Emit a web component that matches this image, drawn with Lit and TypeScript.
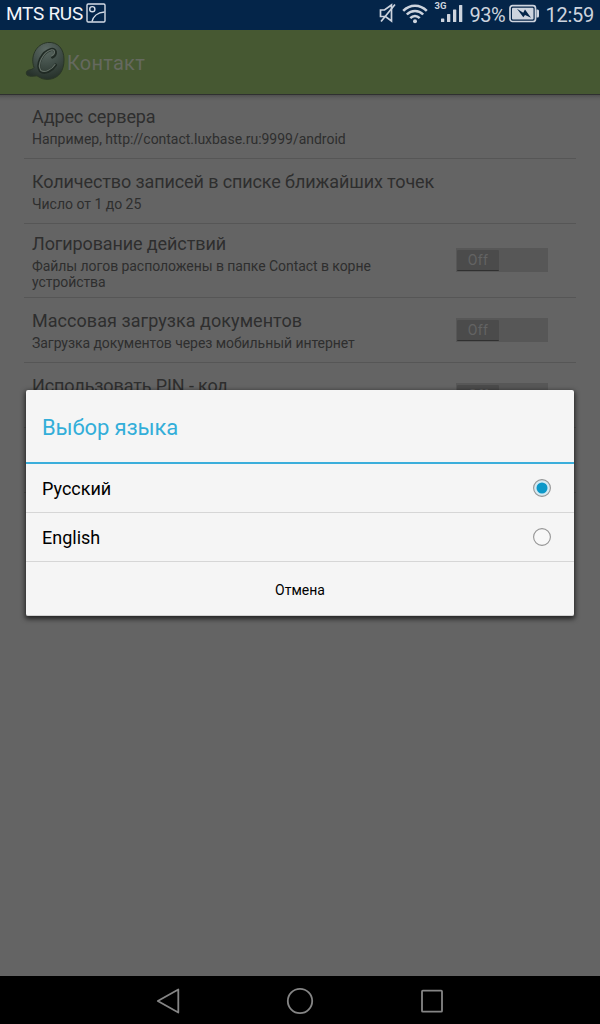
import { LitElement, html, css, svg } from "lit";
import { customElement, property, state } from "lit/decorators.js";
import { classMap } from "lit/directives/class-map.js";

interface Setting {
  title: string;
  summary?: string;
  toggle?: boolean;
  loose?: boolean;
}

const SETTINGS: Setting[] = [
  { title: "Адрес сервера", summary: "Например, http://contact.luxbase.ru:9999/android" },
  { title: "Количество записей в списке ближайших точек", summary: "Число от 1 до 25" },
  { title: "Логирование действий", summary: "Файлы логов расположены в папке Contact в корне устройства", toggle: true },
  { title: "Массовая загрузка документов", summary: "Загрузка документов через мобильный интернет", toggle: true, loose: true },
  { title: "Использовать PIN - код", summary: "", toggle: true },
  { title: "" },
];

@customElement("status-bar")
class StatusBar extends LitElement {
  static styles = css`
    :host { display: flex; height: 30px; background: #042549; color: #f2f5fa; align-items: center; justify-content: space-between; padding: 0 6px 0 6px; box-sizing: border-box; }
    .side { display: flex; align-items: center; height: 30px; }
    .carrier { font-size: 19px; line-height: 28px; letter-spacing: -0.27px; height: 30px; }
    .right { color: #cdd4de; }
    .value { font-size: 20px; line-height: 31px; height: 30px; }
    .percent { letter-spacing: -0.5px; width: 37px; margin-left: 4px; }
    .clock { letter-spacing: -0.25px; margin-left: 5px; }
    .net { display: grid; width: 31px; height: 30px; margin-left: 6px; }
    .net > * { grid-area: 1 / 1; }
    .tech { font-size: 9.500px; font-weight: 700; line-height: 12px; letter-spacing: 0.2px; }
    svg { display: block; }
    .pic { margin: -4px 0 0 3px; }
    .wifi { margin-left: 6px; }
    .battery { margin-left: 3px; }
  `;
  render() {
    return html`
      <div class="side">
        <span class="carrier">MTS RUS</span>
        <svg class="pic" width="20" height="20" viewBox="0 0 20 20" fill="none" stroke="#d5dce6" stroke-width="1.4">
          <rect x="1" y="1" width="18" height="18" rx="1.2" />
          <circle cx="6.3" cy="6.2" r="2.6" />
          <path d="M6 18.500C7 14 11 9.500 18.500 9" />
        </svg>
      </div>
      <div class="side right">
        <svg width="18" height="30" viewBox="0 0 18 30" fill="none" stroke="#cdd4de" stroke-width="1.7">
          <path d="M2.500 10H6.500L13.500 5V21L7.500 16.500H2.500Z" />
          <path d="M17 4.500L3 21.500" />
        </svg>
        <svg class="wifi" width="26" height="30" viewBox="0 0 26 30" fill="none" stroke="#cdd4de" stroke-width="2.500">
          <path d="M1.200 10.800C8 3.900 18 3.900 24.800 10.800" />
          <path d="M4.800 14.500C9.500 9.700 16.500 9.700 21.200 14.500" />
          <path d="M8.300 18.200C11 15.300 15 15.300 17.700 18.200" />
          <circle cx="13" cy="21.300" r="2" fill="#cdd4de" stroke="none" />
        </svg>
        <div class="net">
          <svg width="31" height="30" viewBox="0 0 31 30" fill="#cdd4de">
            <rect x="7" y="18.500" width="3.300" height="3.500" rx=".6" />
            <rect x="13" y="14" width="3.300" height="8" rx=".6" />
            <rect x="19" y="9.500" width="3.300" height="12.500" rx=".6" />
            <rect x="25" y="5" width="3.300" height="17" rx=".6" />
          </svg>
          <span class="tech">3G</span>
        </div>
        <span class="value percent">93%</span>
        <svg class="battery" width="31" height="30" viewBox="0 0 31 30">
          <rect x="1" y="5.700" width="25.500" height="15.800" rx="2.500" fill="none" stroke="#cdd4de" stroke-width="1.700" />
          <rect x="3" y="7.700" width="21.500" height="11.800" rx="1" fill="#cdd4de" />
          <path d="M27.500 9.500h1.200q1.300 0 1.300 1.500v5q0 1.500-1.300 1.500h-1.200z" fill="#cdd4de" />
          <path d="M8 8.800L14.200 12.800L16 9.600L22 17.800L16 15L14.300 17.300Z" fill="#042549" />
        </svg>
        <span class="value clock">12:59</span>
      </div>
    `;
  }
}

@customElement("action-bar")
class ActionBar extends LitElement {
  static styles = css`
    :host { display: flex; height: 64px; box-sizing: border-box; align-items: center; padding-left: 24px; background: #465832; color: #65695f; }
    .title { font-size: 20px; letter-spacing: 0.25px; line-height: 24px; margin: 2px 0 0 0; }
    svg { display: block; width: 43px; height: 44px; }
  `;
  render() {
    return html`
      <svg viewBox="0 0 43 44">
        <defs>
          <radialGradient id="ball" cx="52%" cy="20%" r="78%">
            <stop offset="0" stop-color="#5c6963" />
            <stop offset=".5" stop-color="#414e48" />
            <stop offset="1" stop-color="#27322b" />
          </radialGradient>
        </defs>
        <path d="M23.500 2.500C34 1.500 40 9 40 19.500C40 31 35 38 25.500 39.300C20 39.800 17 38.500 13 35.800C8 36.500 2 37 2.300 32.800C3 28.500 8 31 10 27.500C6 16.500 12 4 23.500 2.500Z" fill="url(#ball)" stroke="#2a3626" stroke-width="1" />
        <path d="M28.500 17C33 14 32 8.500 27 9.500C18 12 12 24.500 16.500 31C21 34.500 28 30.500 31.500 25" fill="none" stroke="#202a24" stroke-width="3.200" stroke-linecap="round" />
        <path d="M27.500 16C32 13.500 31 9 27 10C19 12.500 12.500 24.500 17 30.500C20.500 33 27.500 30 31 24.500" fill="none" stroke="#626e66" stroke-width="1.300" stroke-linecap="round" />
      </svg>
      <span class="title">Контакт</span>
    `;
  }
}

@customElement("setting-row")
class SettingRow extends LitElement {
  @property({ attribute: false }) item!: Setting;
  static styles = css`
    :host { display: flex; align-items: center; box-sizing: border-box; min-height: 65px; margin: 0 24px; padding: 0 28px 0 8px; border-bottom: 1px solid #565656; color: #2e2e2e; }
    .texts { flex: 1; padding: 8.500px 0 7.500px; }
    .title { font-size: 18px; line-height: 21px; letter-spacing: -0.11px; min-height: 21px; }
    .title.loose { letter-spacing: 0.05px; }
    .summary { font-size: 14px; line-height: 16px; margin-top: 4px; min-height: 16px; letter-spacing: -0.02px; }
    .narrow { max-width: 350px; letter-spacing: -0.06px; }
    .track { width: 92px; height: 24px; background: #575757; box-sizing: border-box; padding: 2px 1px 1px; margin-bottom: 1px; }
    .thumb { width: 42px; height: 21px; box-sizing: border-box; background: #4b4b4b; border-bottom: 1px solid #303030; border-radius: 1px; color: #636363; font-size: 14px; line-height: 21px; text-align: center; letter-spacing: 0.3px; }
  `;
  render() {
    const { title, summary, toggle, loose } = this.item;
    return html`
      <div class="texts">
        <div class=${classMap({ title: true, loose: !!loose })}>${title}</div>
        <div class=${classMap({ summary: true, narrow: !!toggle })}>${summary}</div>
      </div>
      ${toggle ? html`<div class="track"><div class="thumb">Off</div></div>` : null}
    `;
  }
}

@customElement("language-dialog")
class LanguageDialog extends LitElement {
  @state() private selected = "Русский";
  static styles = css`
    :host { display: block; background: #f5f5f5; border-radius: 2px; color: #000; box-shadow: 0 2px 5px 1px rgba(0, 0, 0, 0.65); border-bottom: 1px solid #d2d2d2; box-sizing: border-box; height: 226px; }
    .heading { height: 72px; box-sizing: border-box; padding: 0 16px; font-size: 22px; line-height: 76px; letter-spacing: -0.12px; color: #33aed9; }
    .rule { height: 2px; background: #3baedb; }
    .option { display: flex; align-items: center; justify-content: space-between; height: 49px; box-sizing: border-box; padding: 0 22px 0 16px; border-bottom: 1px solid #d6d6d6; font-size: 18px; cursor: pointer; }
    .name { line-height: 48px; padding-top: 2px; }
    svg { display: block; }
    .cancel { text-align: center; font-size: 14px; line-height: 56px; height: 53px; }
  `;
  render() {
    return html`
      <div class="heading">Выбор языка</div>
      <div class="rule"></div>
      ${["Русский", "English"].map(
        (name) => html`
          <div class="option" @click=${() => (this.selected = name)}>
            <span class="name">${name}</span>
            <svg width="20" height="20" viewBox="0 0 20 20">
              <circle cx="10" cy="10" r="8.400" fill=${name === this.selected ? "#d5eaf2" : "#f8f8f8"} stroke="#959595" stroke-width="1.100" />
              ${name === this.selected ? svg`<circle cx="10" cy="10" r="5.500" fill="#0c98c8" />` : null}
            </svg>
          </div>
        `,
      )}
      <div class="cancel">Отмена</div>
    `;
  }
}

@customElement("nav-bar")
class NavBar extends LitElement {
  static styles = css`
    :host { display: flex; justify-content: center; align-items: center; gap: 104px; height: 48px; background: #000; padding-top: 2px; box-sizing: border-box; }
    svg { display: block; fill: none; stroke: #858585; stroke-width: 1.800; stroke-linejoin: round; }
  `;
  render() {
    return html`
      <svg width="28" height="28" viewBox="0 0 28 28"><path d="M3.800 14L24.300 2.500V25.500Z" /></svg>
      <svg width="28" height="28" viewBox="0 0 28 28"><circle cx="14" cy="14" r="12.200" /></svg>
      <svg width="28" height="28" viewBox="0 0 28 28"><rect x="4" y="3.700" width="20" height="21" rx="0.800" /></svg>
    `;
  }
}

@customElement("app-root")
class AppRoot extends LitElement {
  static styles = css`
    :host { display: flex; flex-direction: column; position: relative; width: 600px; height: 1024px; overflow: hidden; background: #646464; font-family: Roboto, "Noto Sans", sans-serif; }
    .list { flex: 1; background: linear-gradient(#2f3030 0, #2f3030 1px, #4f4f4f 1px, #5e5e5e 4px, #646464 7px); }
    .dialog { position: absolute; left: 26px; top: 390px; width: 548px; }
  `;
  render() {
    return html`
      <status-bar></status-bar>
      <action-bar></action-bar>
      <div class="list">${SETTINGS.map((item) => html`<setting-row .item=${item}></setting-row>`)}</div>
      <nav-bar></nav-bar>
      <language-dialog class="dialog"></language-dialog>
    `;
  }
}
